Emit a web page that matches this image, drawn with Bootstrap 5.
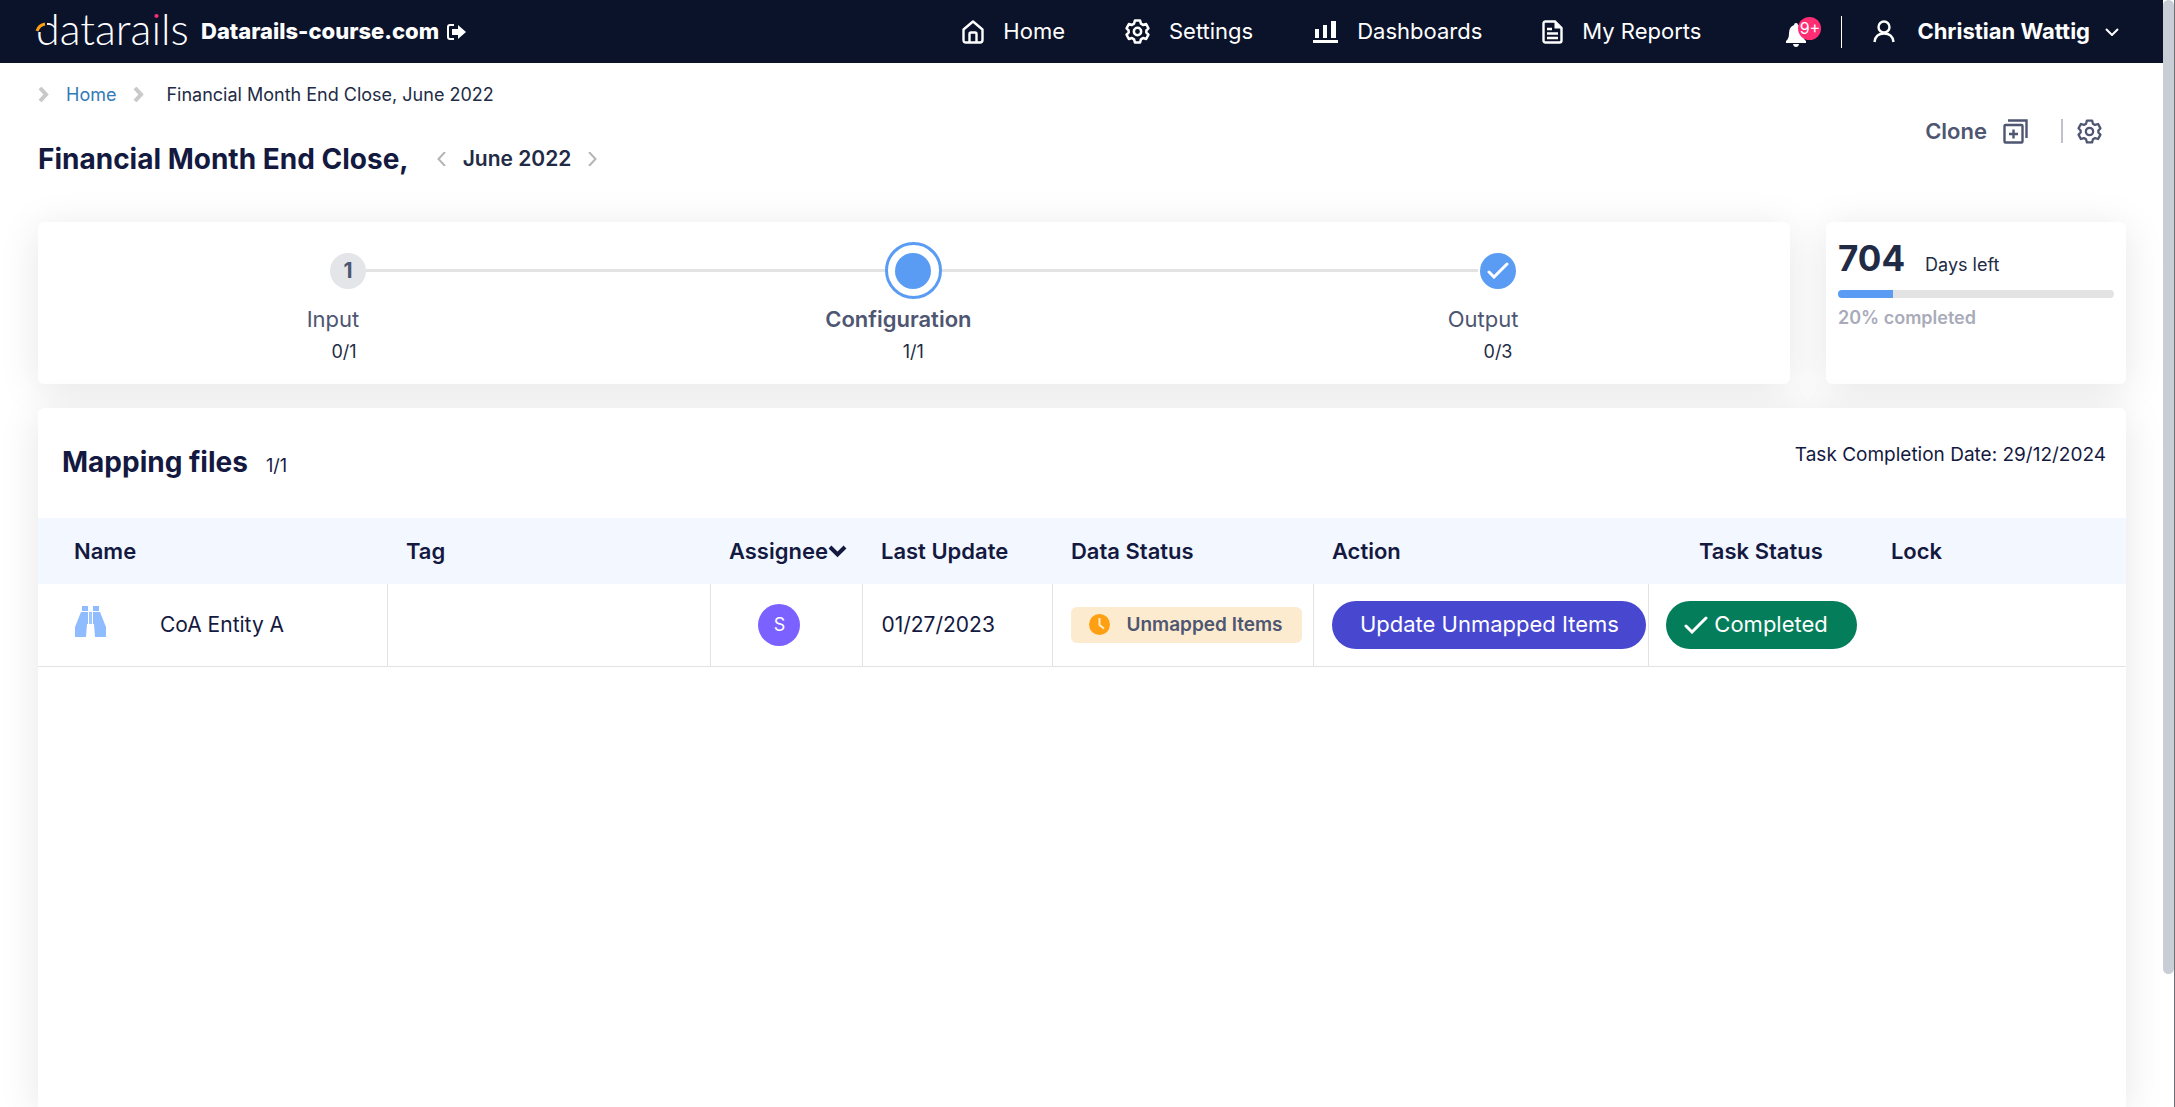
<!DOCTYPE html>
<html lang="en">
<head>
<meta charset="utf-8">
<meta name="viewport" content="width=device-width, initial-scale=1">
<title>Financial Month End Close, June 2022</title>
<link href="https://cdn.jsdelivr.net/npm/bootstrap@5.3.0/dist/css/bootstrap.min.css" rel="stylesheet">
<style>
  body { font-family: Inter, "Open Sans", sans-serif; font-size: 18px; line-height: 27px; color: #222b45; background: #fff; }
  a { text-decoration: none; }
  svg { display: block; flex: none; }
  .topbar { background: #0b132b; height: 63px; padding: 0 44px 0 36px; color: #fff; }
  .topbar a, .topbar button { color: #fff; white-space: nowrap; }
  .topbar .nav-entry { font-size: 22px; gap: 19px; }
  .nav-set { gap: 60px; margin-right: 85px; }
  .logo { overflow: visible; }
  .brand-company { font-size: 22px; font-weight: 800; gap: 8px; margin-left: 11px; }
  .plain { background: none; border: 0; padding: 0; color: inherit; font: inherit; }
  .bell { width: 35px; height: 32px; padding-top: 6px; margin-right: 20px; }
  .bell-count { top: 1px; right: 0; width: 23px; height: 23px; background: #ff2e74; color: #fff; font-size: 16px; line-height: 22px; text-align: center; border-radius: 50%; }
  .v-rule { width: 1px; height: 32px; background: #fff; margin-right: 31px; }
  .user { font-size: 22px; font-weight: 700; gap: 22px; }
  .user-name { gap: 15px; }
  .page-head { padding: 18px 61px 42px 38px; }
  .crumbs { gap: 17px; }
  .crumbs a { color: #337ab7; }
  .crumbs span { margin-left: 5px; }
  .title-row { margin-top: 30px; line-height: 42px; }
  .title-row h1, .files-head h2 { font-size: 28px; line-height: 42px; font-weight: 700; color: #14193f; }
  .period { font-size: 21px; font-weight: 600; gap: 17px; margin-left: 28px; }
  .tools { margin-top: 38px; height: 24px; color: #4e5671; font-size: 22px; font-weight: 600; }
  .tools i { width: 2px; height: 24px; background: #bfc2cd; margin: 0 14px 0 33px; }
  .panel { background: #fff; border-radius: 6px; box-shadow: 0 6px 40px rgba(0,0,0,.1); }
  .summary { gap: 36px; padding: 0 37px 0 38px; margin-bottom: 24px; }
  .steps { padding: 20px calc(100% / 6 - 18px) 20px calc(100% / 6); }
  .track { flex: 1 1 0; min-width: 0; }
  .step { width: 36px; flex: none; white-space: nowrap; }
  .step.active { width: 57px; }
  .step-mark { height: 57px; }
  .dot { width: 36px; height: 36px; border-radius: 50%; background: #5a9cf3; font-size: 21px; font-weight: 700; color: #4e5671; }
  .dot.idle { background: #e4e5e9; }
  .ring { width: 57px; height: 57px; border: 3px solid #5a9cf3; border-radius: 50%; }
  .step-name { font-size: 22px; color: #4e5671; margin-top: 7px; padding-right: 30px; }
  .step.active .step-name { font-weight: 600; }
  .step-count { margin-top: 7px; line-height: 24px; }
  .step-line { flex: 30 1 0; height: 3px; margin-top: 27px; background: #e3e3e3; }
  .step-line.long { flex-grow: 31; margin-right: 2px; }
  .deadline { width: 300px; flex: none; padding: 12px; }
  .days { font-size: 35px; line-height: 48px; font-weight: 700; }
  .deadline .progress { height: 8px; margin-top: 8px; background: #e3e3e3; border-radius: 4px; }
  .deadline .progress-bar { background: #5a9cf3; }
  .done { margin-top: 6px; color: #a9abb9; font-weight: 600; }
  .days-label { margin-left: 20px; }
  .files { margin: 0 37px 0 38px; border-radius: 6px 6px 0 0; }
  .files-head { padding: 33px 20px 35px 24px; }
  .files-head span { color: #14193f; }
  .files-head .due { font-size: 19px; }
  .files-count { margin-left: 18px; }
  .grid-table { table-layout: fixed; margin: 0; color: #14193f; font-size: 21px; }
  .grid-table th { height: 66px; background: #f3f7ff; font-size: 22px; font-weight: 600; padding: 0 0 0 18px; border: 0; vertical-align: middle; color: #14193f; white-space: nowrap; }
  .grid-table td { height: 82px; padding: 0 0 0 18px; vertical-align: middle; border: 0 solid #e3e3e3; border-bottom-width: 1px; color: #14193f; white-space: nowrap; background: #fff; }
  .grid-table td.ruled { border-right-width: 1px; }
  .grid-table .first { padding-left: 36px; }
  .file-name { gap: 53px; }
  .file-icon { margin-bottom: 6px; }
  .avatar { width: 42px; height: 42px; border-radius: 50%; background: #7b61ff; color: #fff; font-size: 18px; margin-left: 29px; }
  .state { width: 231px; height: 36px; border-radius: 6px; background: #fdebd0; color: #4e5671; font-size: 19px; font-weight: 600; padding: 0 18px; gap: 16px; }
  .pill { height: 48px; font-size: 22px; color: #fff; border: 0; border-radius: 24px; }
  .pill-update { width: 314px; background: #4747cf; }
  .pill-done { width: 191px; background: #047d5a; gap: 6px; padding: 0 18px; }
  .grid-table td.task-cell { padding-left: 17px; }
  .scroll-rail { width: 12px; flex: none; border-right: 1px solid #6c6f73; background: #fff; }
  .scroll-thumb { height: 88%; background: #c9cdd6; border-radius: 6px; }
</style>
</head>
<body class="d-flex vh-100 overflow-hidden">
<div class="d-flex flex-column flex-fill overflow-hidden">
  <header class="topbar d-flex align-items-center flex-shrink-0">
    <a href="#" aria-label="datarails">
      <svg class="logo" width="154" height="63" viewBox="0 0 154 63">
        <defs><linearGradient id="dotted" gradientUnits="userSpaceOnUse" x1="0" y1="0" x2="0" y2="63"><stop offset=".33" stop-color="#ff2e74"/><stop offset=".33" stop-color="#fff"/></linearGradient></defs>
        <text x="0" y="45" font-family="Lato" font-weight="300" font-size="43" fill="#fff">datara<tspan fill="url(#dotted)">i</tspan>ls</text>
        <path d="M0 32V20H11V28L6 32z" fill="#0b132b"/>
        <path d="M1 31Q3 25 9 24" fill="none" stroke="#ffa012" stroke-width="3"/>
      </svg>
    </a>
    <a href="#" class="brand-company d-flex align-items-center">Datarails-course.com
      <svg width="19" height="16" viewBox="0 0 19 16"><path d="M7 1H3Q1 1 1 3v10q0 2 2 2h4" fill="none" stroke="#fff" stroke-width="2"/><path d="M5 5h6V1l8 7-8 7v-4H5z" fill="#fff"/></svg>
    </a>
    <nav class="nav-set d-flex ms-auto">
      <a href="#" class="nav-entry d-flex align-items-center">
        <svg width="22" height="24" viewBox="0 0 22 24" fill="none" stroke="#fff" stroke-width="2.4"><path d="M1.500 9.500 11 1.500l9.500 8V20q0 2.500-2.500 2.500H4Q1.500 22.500 1.500 20z" stroke-linejoin="round"/><path d="M7.500 22v-8q0-1.500 1.500-1.500h4q1.500 0 1.500 1.500v8"/></svg>Home</a>
      <a href="#" class="nav-entry d-flex align-items-center">
        <svg width="25" height="25" viewBox="0 0 24 24" fill="none" stroke="#fff" stroke-width="2.400" stroke-linejoin="round"><path d="M9.500 1.500h5l.8 3 2 1.200 3-.9 2.200 4.200-2 2v2l2 2-2.200 4.200-3-.9-2 1.200-.8 3h-5l-.8-3-2-1.200-3 .9L1.500 15l2-2v-2l-2-2 2.200-4.200 3 .9 2-1.200z"/><circle cx="12" cy="12" r="3.500"/></svg>Settings</a>
      <a href="#" class="nav-entry d-flex align-items-center">
        <svg width="25" height="22" viewBox="0 0 25 22" fill="#fff"><path d="M0 19h25v3H0zM2 8h4v9H2zM10 4h4v13h-4zM18 0h5v17h-5z"/></svg>Dashboards</a>
      <a href="#" class="nav-entry d-flex align-items-center">
        <svg width="21" height="24" viewBox="0 0 21 24" fill="none" stroke="#fff" stroke-width="2.400"><path d="M3 1.500h10L19.500 8v12.500q0 2-2 2H3.500q-2 0-2-2v-17q0-2 2-2z"/><path d="M12.500 1v7.500H20z" fill="#fff" stroke="none"/><path d="M5 9h5M5 13.500h11M5 18h11"/></svg>My Reports</a>
    </nav>
    <button class="plain bell position-relative" aria-label="Notifications">
      <svg width="20" height="24" viewBox="0 0 20 24" fill="#fff"><path d="M10 0q2 0 2 2 5 2 5 8 0 6 3 8v2H0v-2q3-2 3-8 0-6 5-8 0-2 2-2zM7 21h6q-.5 3-3 3t-3-3z"/></svg>
      <span class="bell-count position-absolute">9+</span>
    </button>
    <div class="v-rule"></div>
    <button class="plain user d-flex align-items-center">
      <svg width="22" height="23" viewBox="0 0 22 23" fill="none" stroke="#fff" stroke-width="2.400"><circle cx="11" cy="7" r="5.500"/><path d="M1.500 22q1-8.500 9.500-8.500t9.500 8.500"/></svg>
      <span class="user-name d-flex align-items-center">Christian Wattig
      <svg width="14" height="8" viewBox="0 0 14 8" fill="none" stroke="#fff" stroke-width="2"><path d="m1 1 6 6 6-6"/></svg></span>
    </button>
  </header>

  <section class="page-head d-flex justify-content-between align-items-start flex-shrink-0">
    <div>
      <nav class="crumbs d-flex align-items-center" aria-label="Breadcrumb">
        <svg width="11" height="15" viewBox="0 0 11 15" fill="none" stroke="#c9c9c9" stroke-width="4"><path d="m2 1 6 6.500L2 14"/></svg>
        <a href="#">Home</a>
        <svg width="11" height="15" viewBox="0 0 11 15" fill="none" stroke="#c9c9c9" stroke-width="4"><path d="m2 1 6 6.500L2 14"/></svg>
        <span>Financial Month End Close, June 2022</span>
      </nav>
      <div class="title-row d-flex align-items-center">
        <h1 class="m-0">Financial Month End Close,</h1>
        <div class="period d-flex align-items-center">
          <button class="plain" aria-label="Previous month"><svg width="9" height="14" viewBox="0 0 9 14" fill="none" stroke="#b5b5b5" stroke-width="2"><path d="M8 0 1.500 7 8 14"/></svg></button>
          <span>June 2022</span>
          <button class="plain" aria-label="Next month"><svg width="9" height="14" viewBox="0 0 9 14" fill="none" stroke="#b5b5b5" stroke-width="2"><path d="m1 0 6.500 7L1 14"/></svg></button>
        </div>
      </div>
    </div>
    <div class="tools d-flex align-items-center">
      <button class="plain d-flex align-items-center gap-3">Clone
        <svg width="25" height="25" viewBox="0 0 25 25" fill="none" stroke="#4e5671" stroke-width="2.400"><rect x="1.500" y="6" width="18" height="17.500" rx="1"/><path d="M5 1.500h18.500V19M10.500 10.500v9M6 15h9"/></svg>
      </button>
      <i></i>
      <button class="plain" aria-label="Process settings">
        <svg width="25" height="25" viewBox="0 0 24 24" fill="none" stroke="#4e5671" stroke-width="2.200" stroke-linejoin="round"><path d="M9.500 1.500h5l.8 3 2 1.200 3-.9 2.200 4.200-2 2v2l2 2-2.200 4.200-3-.9-2 1.200-.8 3h-5l-.8-3-2-1.200-3 .9L1.500 15l2-2v-2l-2-2 2.200-4.200 3 .9 2-1.200z"/><circle cx="12" cy="12" r="3.500"/></svg>
      </button>
    </div>
  </section>

  <section class="summary d-flex flex-shrink-0">
    <div class="panel track">
      <div class="steps d-flex align-items-start">
        <div class="step d-flex flex-column align-items-center">
          <div class="step-mark d-flex align-items-center"><div class="dot idle d-flex align-items-center justify-content-center">1</div></div>
          <div class="step-name">Input</div>
          <div class="step-count pe-2">0/1</div>
        </div>
        <div class="step-line"></div>
        <div class="step active d-flex flex-column align-items-center">
          <div class="ring d-flex align-items-center justify-content-center"><div class="dot"></div></div>
          <div class="step-name">Configuration</div>
          <div class="step-count">1/1</div>
        </div>
        <div class="step-line long"></div>
        <div class="step d-flex flex-column align-items-center">
          <div class="step-mark d-flex align-items-center"><div class="dot d-flex align-items-center justify-content-center"><svg width="22" height="17" viewBox="0 0 22 17" fill="none" stroke="#fff" stroke-width="3" stroke-linecap="round"><path d="m2 10 5 5L20 2"/></svg></div></div>
          <div class="step-name">Output</div>
          <div class="step-count">0/3</div>
        </div>
      </div>
    </div>
    <div class="panel deadline">
      <div class="d-flex align-items-baseline"><strong class="days">704</strong><span class="days-label">Days left</span></div>
      <div class="progress" role="progressbar" aria-label="Completed" aria-valuenow="20" aria-valuemin="0" aria-valuemax="100"><div class="progress-bar" style="width: 20%"></div></div>
      <div class="done">20% completed</div>
    </div>
  </section>

  <section class="panel files flex-fill">
    <div class="files-head d-flex justify-content-between align-items-start">
      <div class="d-flex align-items-baseline"><h2 class="m-0">Mapping files</h2><span class="files-count">1/1</span></div>
      <span class="due">Task Completion Date: 29/12/2024</span>
    </div>
    <table class="table grid-table">
      <colgroup>
        <col style="width: 16.760%"><col style="width: 15.470%"><col style="width: 7.280%"><col style="width: 9.100%"><col style="width: 12.500%"><col style="width: 16.040%"><col style="width: 10.730%"><col>
      </colgroup>
      <thead>
        <tr>
          <th class="first">Name</th><th>Tag</th>
          <th><span class="d-flex align-items-center">Assignee<svg width="19" height="13" viewBox="0 0 19 13" fill="none" stroke="#14193f" stroke-width="4"><path d="m2 2 7.500 7.500L17 2"/></svg></span></th>
          <th>Last Update</th><th>Data Status</th><th>Action</th><th class="text-center p-0">Task Status</th><th>Lock</th>
        </tr>
      </thead>
      <tbody>
        <tr>
          <td class="first ruled"><div class="file-name d-flex align-items-center">
            <svg class="file-icon" width="33" height="31" viewBox="0 0 33 31" fill="#8fbcff"><path d="M8 0h6v5H8zM19 0h6v5h-6zM7 6h7v12h-1l-1 13H1V21zM26 6h-7v12h1l1 13h11V21z"/><path d="M15 6h3v12h-3z" fill="#9fc6ff"/></svg>
            <span>CoA Entity A</span></div></td>
          <td class="ruled"></td>
          <td class="ruled"><div class="avatar d-flex align-items-center justify-content-center">S</div></td>
          <td class="ruled">01/27/2023</td>
          <td class="ruled"><div class="state d-flex align-items-center"><svg width="21" height="21" viewBox="0 0 21 21"><circle cx="10.500" cy="10.500" r="10.500" fill="#ffa012"/><path d="M10.500 4v7l4.500 3.500" fill="none" stroke="#fdebd0" stroke-width="2"/></svg>Unmapped Items</div></td>
          <td class="ruled"><button class="pill pill-update">Update Unmapped Items</button></td>
          <td class="task-cell"><button class="pill pill-done d-flex align-items-center"><svg width="24" height="18" viewBox="0 0 24 18" fill="none" stroke="#fff" stroke-width="3" stroke-linecap="round"><path d="m2 10 6 6L22 2"/></svg>Completed</button></td>
          <td></td>
        </tr>
      </tbody>
    </table>
  </section>
</div>
<div class="scroll-rail"><div class="scroll-thumb"></div></div>
<script src="https://cdn.jsdelivr.net/npm/bootstrap@5.3.0/dist/js/bootstrap.bundle.min.js"></script>
</body>
</html>
